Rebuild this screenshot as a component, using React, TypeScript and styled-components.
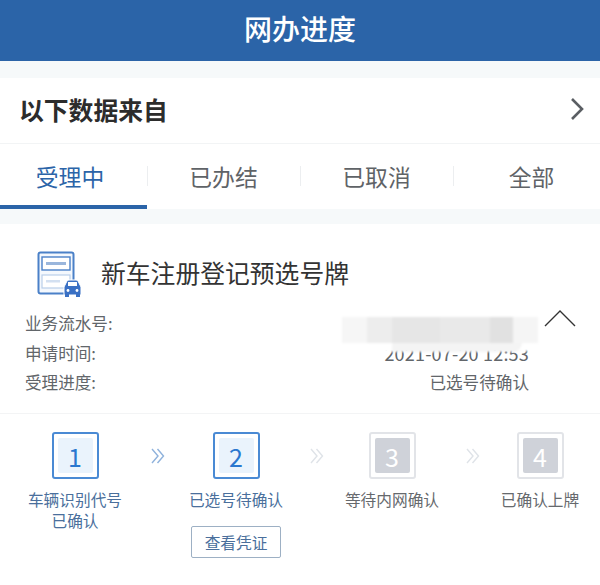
import React, {FC} from 'react';
import styled, {createGlobalStyle} from "styled-components";

const GlobalStyle = createGlobalStyle`
  html, body {
    margin: 0;
    padding: 0;
    background-color: #fff;
    font-family: "Noto Sans CJK SC", "Noto Sans", sans-serif;
  }
`

const Page = styled.div`
  width: 600px;
  height: 585px;
  overflow: hidden;
  background-color: #fff;
`

const Header = styled.header`
  height: 61px;
  box-sizing: border-box;
  padding-bottom: 6px;
  background-color: #2b64a8;
  color: #fff;
  font-size: 28px;
  font-weight: 500;
  display: flex;
  align-items: center;
  justify-content: center;
`

const Gap = styled.div`
  height: ${(p: {$h: number}) => p.$h}px;
  background-color: #f6f9fa;
`

const SourceRow = styled.div`
  height: 66px;
  box-sizing: border-box;
  padding: 0 16px 4px 19px;
  display: flex;
  align-items: center;
  justify-content: space-between;
  font-size: 24.8px;
  font-weight: 700;
  color: #2c2c2c;
  border-bottom: 1px solid #f2f4f5;
`

const Tabs = styled.nav`
  height: 65px;
  display: grid;
  grid-template-columns: 147px 153px 153px 147px;
`

const Tab = styled.div<{$active?: boolean; $shift?: number}>`
  display: flex;
  align-items: center;
  justify-content: center;
  padding-top: 4px;
  box-sizing: border-box;
  font-size: 22.8px;
  color: ${p => p.$active ? '#2b64a8' : '#5f6367'};
  border-bottom: 4px solid ${p => p.$active ? '#2b64a8' : 'transparent'};
  position: relative;

  & > span {
    transform: translateX(${p => p.$shift || 0}px);
  }

  &:not(:first-child)::before {
    content: '';
    position: absolute;
    left: 0;
    top: 22px;
    height: 20px;
    width: 1px;
    background-color: #eceef0;
  }
`

const Card = styled.section`
  position: relative;
`

const CardTitle = styled.div`
  display: flex;
  align-items: center;
  gap: 19px;
  padding: 26px 0 0 37px;
  height: 48px;
  font-size: 24.8px;
  color: #333;
  line-height: 48px;

  & > span {
    padding-bottom: 4px;
  }
`

const InfoList = styled.div`
  padding: 13px 71px 0 25px;
  display: flex;
  flex-direction: column;
  gap: 5.5px;
  height: 102px;
  border-bottom: 1px solid #f3f4f5;
`

const InfoRow = styled.div`
  display: flex;
  justify-content: space-between;
  height: 24px;
  line-height: 24px;
  font-size: 16.6px;
  color: #62666a;
`

const DateText = styled.span`
  font-size: 18px;
  letter-spacing: 0.2px;
`

const Smudge = styled.div`
  position: absolute;
  left: 342px;
  top: 64px;
  width: 196px;
  height: 64px;
  padding-top: 29px;
  box-sizing: border-box;
  background-color: #fff;
  border-radius: 0 0 16px 0;
  filter: blur(0.8px);
`

const SmudgeBand = styled.div`
  display: flex;
  height: 26px;
`

const SmudgeBlock = styled.div<{$w: number; $c: string}>`
  width: ${p => p.$w}px;
  background-color: ${p => p.$c};
`

const SmudgeFoot = styled.div`
  margin-left: 50px;
  width: 130px;
  height: 9px;
  border-radius: 0 0 12px 0;
  background-color: #f4f4f4;
`

const Collapse = styled.svg`
  position: absolute;
  left: 544px;
  top: 84px;
`

const Steps = styled.div`
  display: grid;
  grid-template-columns: 94px 67px 94px 62px 94px 62px 78px;
  padding: 18px 0 0 28px;
`

const Step = styled.div`
  display: flex;
  flex-direction: column;
  align-items: center;
`

const StepBox = styled.div<{$on?: boolean}>`
  width: 47px;
  height: 47px;
  box-sizing: border-box;
  border: 2px solid ${p => p.$on ? '#4a8ad4' : '#e2e4e8'};
  border-radius: 3px;
  padding: 4px;
  display: flex;
`

const StepNum = styled.div<{$on?: boolean}>`
  flex: 1;
  display: flex;
  align-items: center;
  justify-content: center;
  border-radius: 2px;
  font-size: 25px;
  background-color: ${p => p.$on ? '#eaf3fc' : '#cfd2d9'};
  color: ${p => p.$on ? '#2a77cf' : '#fff'};
`

const StepLabel = styled.div<{$on?: boolean}>`
  margin-top: 10px;
  font-size: 15.7px;
  line-height: 21px;
  text-align: center;
  white-space: nowrap;
  color: ${p => p.$on ? '#4a6f9c' : '#66696d'};
`

const Voucher = styled.button`
  margin-top: 16px;
  width: 90px;
  height: 32px;
  padding: 0;
  background-color: #fff;
  border: 1px solid #9db0c4;
  border-radius: 2px;
  font-family: inherit;
  font-size: 15.7px;
  color: #4a6f9c;
`

const ArrowCell = styled.div`
  height: 47px;
  display: flex;
  align-items: center;
  justify-content: center;
  padding: 0 0 0 5px;
`

const ChevronRight = () => (
    <svg width="14" height="24" viewBox="0 0 14 24" fill="none">
        <path d="M2 2 L12 12 L2 22" stroke="#5a5e63" strokeWidth="2.6"/>
    </svg>
)

const DoubleArrow: FC<{color: string}> = ({color}) => (
    <svg width="14" height="16" viewBox="0 0 14 16" fill="none">
        <path d="M1 1 L7 8 L1 15 M6.5 1 L12.5 8 L6.5 15" stroke={color} strokeWidth="1.4"/>
    </svg>
)

const RegisterIcon = () => (
    <svg width="45" height="47" viewBox="0 0 45 47" fill="none">
        <rect x="1.5" y="1.5" width="35" height="41" rx="2" stroke="#4a80c8" strokeWidth="2" fill="#f4f8fd"/>
        <rect x="5" y="6" width="28" height="13" stroke="#4a80c8" strokeWidth="1.4" fill="#fff"/>
        <rect x="9" y="11" width="20" height="3" fill="#9ab6dc"/>
        <rect x="5" y="24" width="28" height="13" stroke="#b9cfea" strokeWidth="1.2" fill="#fff"/>
        <rect x="9" y="29" width="14" height="2.5" fill="#d3e0f1"/>
        <path d="M27 36 L30 30 Q30.5 29 32 29 L39 29 Q40.5 29 41 30 L44 36 L44 44 L27 44 Z" fill="#3a70c4" stroke="#fff" strokeWidth="1"/>
        <rect x="31" y="31" width="9" height="4" fill="#fff"/>
        <circle cx="31" cy="39.5" r="1.4" fill="#fff"/>
        <circle cx="40" cy="39.5" r="1.4" fill="#fff"/>
        <rect x="28" y="43" width="4" height="3" fill="#3a70c4"/>
        <rect x="39" y="43" width="4" height="3" fill="#3a70c4"/>
    </svg>
)

const steps = [
    {num: 1, on: true, label: <>车辆识别代号<br/>已确认</>},
    {num: 2, on: true, label: '已选号待确认', voucher: true},
    {num: 3, on: false, label: '等待内网确认'},
    {num: 4, on: false, label: '已确认上牌'},
]

const smudgeBlocks = [
    {w: 25, c: '#f6f6f6'},
    {w: 25, c: '#ededed'},
    {w: 48, c: '#e6e6e6'},
    {w: 50, c: '#e9e9e9'},
    {w: 23, c: '#e1e1e1'},
    {w: 25, c: '#f5f5f5'},
]

const App: FC = () => {
    return (
        <Page>
            <GlobalStyle/>
            <Header>网办进度</Header>
            <Gap $h={17}/>
            <SourceRow>
                以下数据来自
                <ChevronRight/>
            </SourceRow>
            <Tabs>
                <Tab $active $shift={-3.5}><span>受理中</span></Tab>
                <Tab><span>已办结</span></Tab>
                <Tab><span>已取消</span></Tab>
                <Tab $shift={5}><span>全部</span></Tab>
            </Tabs>
            <Gap $h={15}/>
            <Card>
                <CardTitle>
                    <RegisterIcon/>
                    <span>新车注册登记预选号牌</span>
                </CardTitle>
                <InfoList>
                    <InfoRow>业务流水号:</InfoRow>
                    <InfoRow><span>申请时间:</span><DateText>2021-07-20 12:53</DateText></InfoRow>
                    <InfoRow><span>受理进度:</span><span>已选号待确认</span></InfoRow>
                </InfoList>
                <Smudge>
                    <SmudgeBand>
                        {smudgeBlocks.map((b, i) => <SmudgeBlock key={i} $w={b.w} $c={b.c}/>)}
                    </SmudgeBand>
                    <SmudgeFoot/>
                </Smudge>
                <Collapse width="32" height="20" viewBox="0 0 32 20" fill="none">
                    <path d="M1 18 L16 3 L31 18" stroke="#333" strokeWidth="1.4"/>
                </Collapse>
                <Steps>
                    {steps.map((s, i) => (
                        <React.Fragment key={s.num}>
                            <Step>
                                <StepBox $on={s.on}><StepNum $on={s.on}>{s.num}</StepNum></StepBox>
                                <StepLabel $on={s.num === 1 || s.num === 2}>{s.label}</StepLabel>
                                {s.voucher && <Voucher>查看凭证</Voucher>}
                            </Step>
                            {i < 3 && <ArrowCell><DoubleArrow color={i === 0 ? '#8fb2dc' : '#dfe3e8'}/></ArrowCell>}
                        </React.Fragment>
                    ))}
                </Steps>
            </Card>
        </Page>
    );
};

export default App;
